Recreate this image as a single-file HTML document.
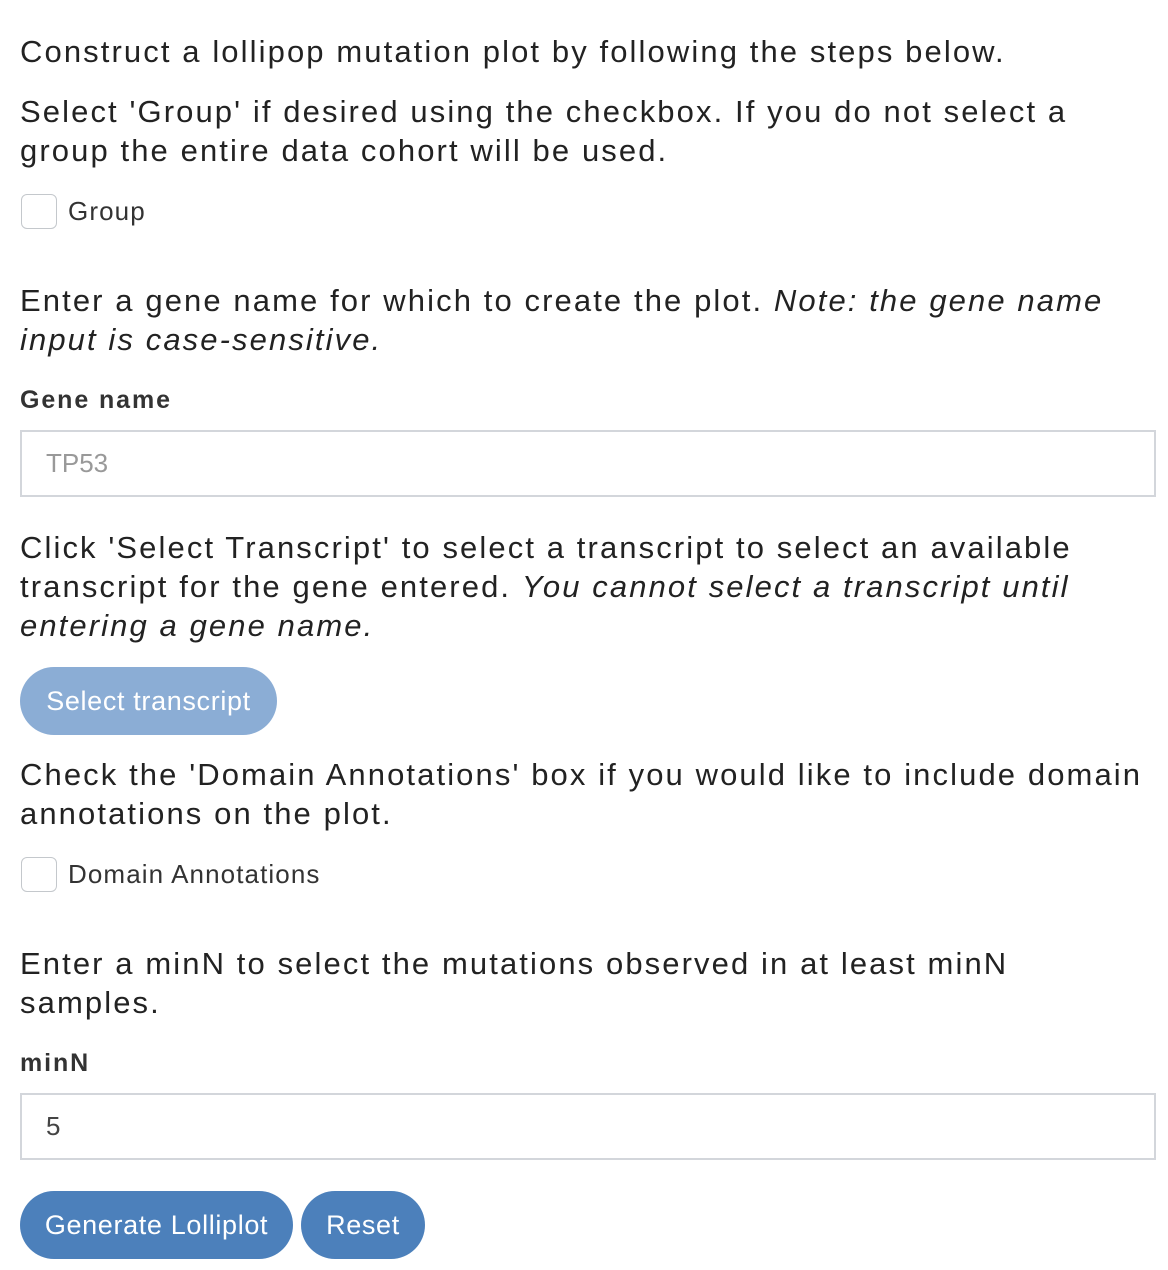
<!DOCTYPE html>
<html><head><meta charset="utf-8">
<style>
html,body{margin:0;padding:0;background:#fff;}
body{width:1168px;height:1270px;position:relative;overflow:hidden;font-family:"Liberation Sans",Arial,sans-serif;color:#222;}
.p{position:absolute;left:20px;font-size:31px;line-height:39px;white-space:nowrap;letter-spacing:2.1px;}
.cb{position:absolute;left:21px;width:36px;height:35px;border:1.5px solid #c4c8cc;border-radius:6px;box-sizing:border-box;}
.cl{position:absolute;left:68px;font-size:26px;line-height:30px;color:#333;letter-spacing:1.1px;}
.lbl{position:absolute;left:20px;font-size:25px;font-weight:bold;line-height:30px;color:#333;letter-spacing:1.9px;}
.inp{position:absolute;left:20px;width:1136px;height:67px;border:2px solid #d3d6db;box-sizing:border-box;font-size:26px;line-height:63px;padding-left:24px;}
.btn{position:absolute;height:68px;border-radius:34px;color:#fff;font-size:27px;line-height:68px;text-align:center;letter-spacing:0.65px;}
</style></head><body>
<div class="p" style="top:32px">Construct a lollipop mutation plot by following the steps below.</div>
<div class="p" style="top:92px">Select 'Group' if desired using the checkbox. If you do not select a<br>group the entire data cohort will be used.</div>
<div class="cb" style="top:194px"></div>
<div class="cl" style="top:196px">Group</div>
<div class="p" style="top:281px">Enter a gene name for which to create the plot. <i>Note: the gene name<br>input is case-sensitive.</i></div>
<div class="lbl" style="top:385px">Gene name</div>
<div class="inp" style="top:430px;color:#999">TP53</div>
<div class="p" style="top:528px">Click 'Select Transcript' to select a transcript to select an available<br>transcript for the gene entered. <i>You cannot select a transcript until<br>entering a gene name.</i></div>
<div class="btn" style="top:667px;left:20px;width:257px;background:#8badd5">Select transcript</div>
<div class="p" style="top:755px">Check the 'Domain Annotations' box if you would like to include domain<br>annotations on the plot.</div>
<div class="cb" style="top:857px"></div>
<div class="cl" style="top:859px">Domain Annotations</div>
<div class="p" style="top:944px">Enter a minN to select the mutations observed in at least minN<br>samples.</div>
<div class="lbl" style="top:1048px">minN</div>
<div class="inp" style="top:1093px;color:#444">5</div>
<div class="btn" style="top:1191px;left:20px;width:273px;background:#4c80bb">Generate Lolliplot</div>
<div class="btn" style="top:1191px;left:301px;width:124px;background:#4c80bb">Reset</div>
</body></html>
